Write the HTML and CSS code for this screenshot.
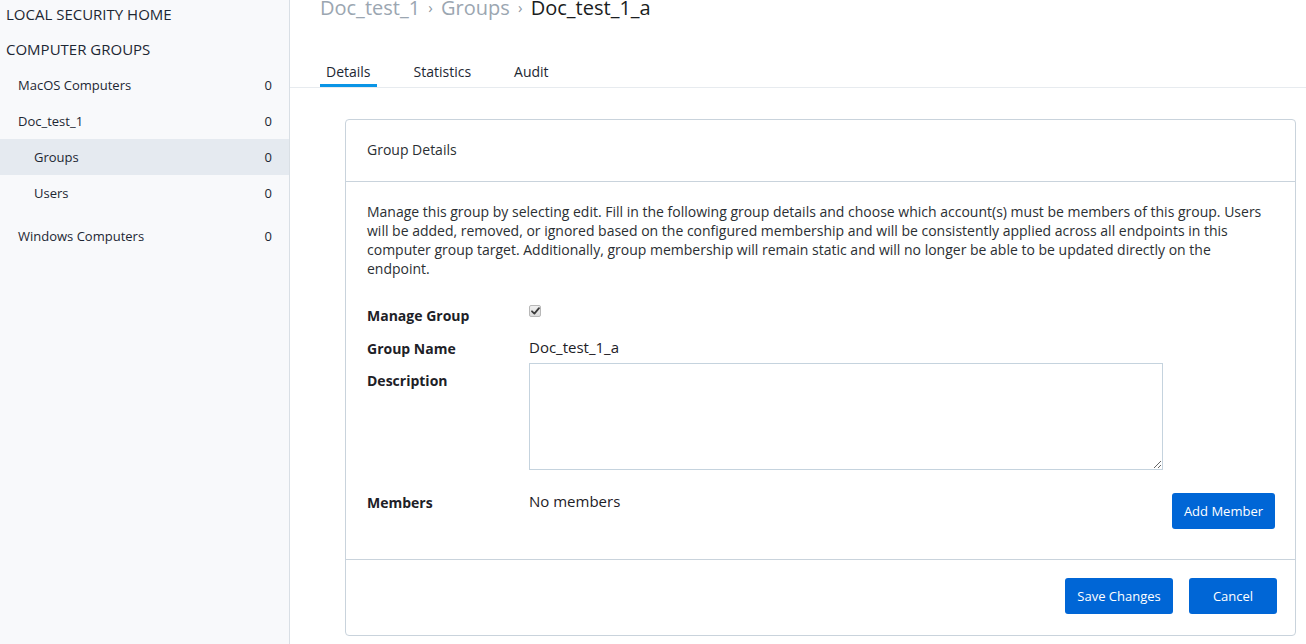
FILE: index.html
```html
<!DOCTYPE html>
<html>
<head>
<meta charset="utf-8">
<link rel="stylesheet" href="styles.css">
</head>
<body>
<aside class="sidebar">
  <div class="side-list">
    <div class="side-head">LOCAL SECURITY HOME</div>
    <div class="side-head">COMPUTER GROUPS</div>
    <div class="side-item"><span>MacOS Computers</span><span>0</span></div>
    <div class="side-item"><span>Doc_test_1</span><span>0</span></div>
    <div class="side-item sub active"><span>Groups</span><span>0</span></div>
    <div class="side-item sub last"><span>Users</span><span>0</span></div>
    <div class="side-item"><span>Windows Computers</span><span>0</span></div>
  </div>
</aside>
<main class="main">
  <div class="crumbs">
    <span class="crumb-link">Doc_test_1</span>
    <span class="crumb-sep">›</span>
    <span class="crumb-link">Groups</span>
    <span class="crumb-sep">›</span>
    <span class="crumb-current">Doc_test_1_a</span>
  </div>
  <nav class="tabs">
    <div class="tab active">Details</div>
    <div class="tab">Statistics</div>
    <div class="tab">Audit</div>
  </nav>
  <section class="card">
    <div class="card-head">Group Details</div>
    <div class="card-body">
      <p class="intro">Manage this group by selecting edit. Fill in the following group details and choose which account(s) must be members of this group. Users will be added, removed, or ignored based on the configured membership and will be consistently applied across all endpoints in this computer group target. Additionally, group membership will remain static and will no longer be able to be updated directly on the endpoint.</p>
      <div class="row row-manage">
        <div class="label">Manage Group</div>
        <div class="value">
          <span class="check" role="checkbox" aria-checked="true" aria-disabled="true">
            <svg width="9" height="8" viewBox="0 0 9 8"><path d="M1 4.3 L3.4 6.6 L8 1.2" fill="none" stroke="#3c3c3c" stroke-width="1.8" stroke-linecap="round" stroke-linejoin="round"/></svg>
          </span>
        </div>
      </div>
      <div class="row row-name">
        <div class="label">Group Name</div>
        <div class="value text">Doc_test_1_a</div>
      </div>
      <div class="row row-desc">
        <div class="label label-desc">Description</div>
        <div class="value"><textarea class="desc"></textarea></div>
      </div>
      <div class="row row-members">
        <div class="label">Members</div>
        <div class="value text members-text">No members</div>
        <button class="btn">Add Member</button>
      </div>
    </div>
    <div class="card-foot">
      <button class="btn btn-save">Save Changes</button>
      <button class="btn btn-cancel">Cancel</button>
    </div>
  </section>
</main>
</body>
</html>
```
FILE: styles.css
```css
html, body {
  margin: 0;
  padding: 0;
}
body {
  font-family: "Open Sans", "Noto Sans", sans-serif;
  color: #2b2f33;
  display: flex;
  height: 644px;
  overflow: hidden;
  background: #ffffff;
}
.sidebar {
  width: 289px;
  flex: 0 0 289px;
  background: #f8f9fb;
  border-right: 1px solid #d9dfe5;
  box-sizing: content-box;
}
.side-list {
  margin-top: -3px;
}
.side-head {
  height: 35px;
  line-height: 35px;
  padding-left: 6px;
  font-size: 15px;
  color: #1d2733;
}
.side-item {
  display: flex;
  justify-content: space-between;
  height: 36px;
  line-height: 36px;
  padding: 0 17px 0 18px;
  font-size: 13px;
  color: #1d2733;
}
.side-item.sub {
  padding-left: 34px;
}
.side-item.active {
  background: #e5eaf0;
}
.side-item.last {
  margin-bottom: 7px;
}
.main {
  flex: 1;
  min-width: 0;
}
.crumbs {
  margin-top: -6px;
  padding-left: 30px;
  font-size: 20px;
  line-height: 27px;
  white-space: nowrap;
}
.crumb-link {
  color: #9ba6b1;
}
.crumb-sep {
  color: #8d98a3;
  font-size: 15px;
  margin: 0 3px;
  position: relative;
  top: -2px;
}
.crumb-current {
  color: #1a1d21;
}
.tabs {
  display: flex;
  margin-top: 39px;
  padding-left: 30px;
  border-bottom: 1px solid #e7ebef;
}
.tab {
  font-size: 14px;
  line-height: 20px;
  padding: 0 6px 2px;
  border-bottom: 3px solid transparent;
  margin-right: 31px;
  color: #1d2733;
}
.tab.active {
  border-bottom-color: #0a95e6;
}
.card {
  margin: 31px 10px 0 55px;
  border: 1px solid #c9d3dc;
  border-radius: 4px;
}
.card-head {
  height: 61px;
  line-height: 59px;
  padding-left: 21px;
  font-size: 14px;
  color: #2b2f33;
  border-bottom: 1px solid #c9d3dc;
}
.card-body {
  padding: 20px 20px 30px 21px;
  font-size: 14px;
  color: #2b2f33;
}
.intro {
  margin: 0 0 28px;
  line-height: 19px;
}
.row {
  display: flex;
  align-items: flex-start;
}
.label {
  width: 162px;
  flex: 0 0 162px;
  font-weight: bold;
  line-height: 19px;
  color: #1d2127;
}
.value {
  flex: 1;
}
.value.text {
  font-size: 15px;
  line-height: 20px;
  margin-top: -2px;
  color: #1d2127;
}
.row-manage {
  height: 19px;
  margin-bottom: 14px;
}
.check {
  display: flex;
  align-items: center;
  justify-content: center;
  width: 12px;
  height: 12px;
  margin-top: -1px;
  box-sizing: border-box;
  border: 1px solid #b8b8b8;
  border-radius: 2px;
  background: linear-gradient(#f0f0f0, #dcdcdc);
}
.row-name {
  height: 19px;
  margin-bottom: 5px;
}
.label-desc {
  padding-top: 8px;
}
.desc {
  display: block;
  width: 634px;
  height: 107px;
  box-sizing: border-box;
  border: 1px solid #c5d3de;
  border-radius: 0;
  margin: 0;
  resize: vertical;
}
.row-desc {
  margin-bottom: 23px;
}
.btn {
  font-family: "Open Sans", "Noto Sans", sans-serif;
  font-size: 13px;
  color: #ffffff;
  background: #0066d6;
  border: 0;
  border-radius: 3px;
  height: 36px;
  padding: 0 12px;
  cursor: pointer;
}
.card-foot {
  border-top: 1px solid #c9d3dc;
  padding: 18px 18px 21px;
  display: flex;
  justify-content: flex-end;
  gap: 16px;
}
.btn-save {
  width: 108px;
}
.btn-cancel {
  width: 88px;
}
```
